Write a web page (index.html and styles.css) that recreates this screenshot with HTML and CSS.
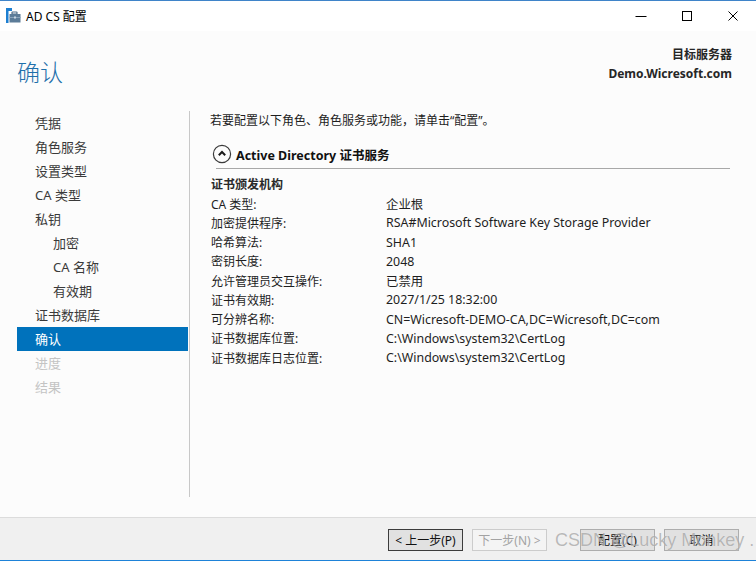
FILE: index.html
```html
<!DOCTYPE html>
<html lang="zh-CN">
<head>
<meta charset="utf-8">
<title>AD CS 配置</title>
<link rel="stylesheet" href="styles.css">
</head>
<body>
<div class="window">
  <div class="titlebar">
    <svg class="app-icon" width="16" height="16" viewBox="0 0 16 16">
      <rect x="0" y="0" width="6" height="3" fill="#1d7fd1"/>
      <rect x="0" y="0" width="2.5" height="15" fill="#1d7fd1"/>
      <rect x="6" y="4" width="5" height="2.2" rx="0.6" fill="none" stroke="#4a6a86" stroke-width="1.2"/>
      <rect x="3.5" y="6" width="11" height="8.5" fill="#5c7c98"/>
      <rect x="3.5" y="9" width="11" height="1" fill="#89a4bb"/>
      <rect x="8" y="8.5" width="2" height="2" fill="#c9d6e1"/>
    </svg>
    <span class="title-text">AD CS 配置</span>
    <div class="controls">
      <span class="ctl"><svg width="12" height="12" viewBox="0 0 12 12"><line x1="0.5" y1="6.5" x2="11.5" y2="6.5" stroke="#000" stroke-width="1"/></svg></span>
      <span class="ctl"><svg width="12" height="12" viewBox="0 0 12 12"><rect x="1.5" y="1.5" width="9" height="9" fill="none" stroke="#000" stroke-width="1"/></svg></span>
      <span class="ctl"><svg width="12" height="12" viewBox="0 0 12 12"><path d="M1.5 1.5 L10.5 10.5 M10.5 1.5 L1.5 10.5" stroke="#000" stroke-width="1"/></svg></span>
    </div>
  </div>

  <div class="header">
    <div class="page-title">确认</div>
    <div class="target">
      <div class="target-label">目标服务器</div>
      <div class="target-name">Demo.Wicresoft.com</div>
    </div>
  </div>

  <div class="main">
    <nav class="nav">
      <div class="nav-item">凭据</div>
      <div class="nav-item">角色服务</div>
      <div class="nav-item">设置类型</div>
      <div class="nav-item">CA 类型</div>
      <div class="nav-item">私钥</div>
      <div class="nav-item sub">加密</div>
      <div class="nav-item sub">CA 名称</div>
      <div class="nav-item sub">有效期</div>
      <div class="nav-item">证书数据库</div>
      <div class="nav-item active">确认</div>
      <div class="nav-item disabled">进度</div>
      <div class="nav-item disabled">结果</div>
    </nav>
    <div class="vsep"></div>
    <section class="content">
      <p class="intro">若要配置以下角色、角色服务或功能，请单击“配置”。</p>
      <div class="section-head">
        <svg class="collapse" width="20" height="20" viewBox="0 0 20 20">
          <circle cx="10" cy="10" r="8.6" fill="none" stroke="#3a3a3a" stroke-width="1.2"/>
          <path d="M6.8 11.2 L10 8 L13.2 11.2" fill="none" stroke="#1a1a1a" stroke-width="2"/>
        </svg>
        <span class="section-title">Active Directory 证书服务</span>
      </div>
      <div class="hline"></div>
      <div class="group-title">证书颁发机构</div>
      <div class="details">
        <div class="k">CA 类型:</div><div class="v">企业根</div>
        <div class="k">加密提供程序:</div><div class="v">RSA#Microsoft Software Key Storage Provider</div>
        <div class="k">哈希算法:</div><div class="v">SHA1</div>
        <div class="k">密钥长度:</div><div class="v">2048</div>
        <div class="k">允许管理员交互操作:</div><div class="v">已禁用</div>
        <div class="k">证书有效期:</div><div class="v">2027/1/25 18:32:00</div>
        <div class="k">可分辨名称:</div><div class="v">CN=Wicresoft-DEMO-CA,DC=Wicresoft,DC=com</div>
        <div class="k">证书数据库位置:</div><div class="v">C:\Windows\system32\CertLog</div>
        <div class="k">证书数据库日志位置:</div><div class="v">C:\Windows\system32\CertLog</div>
      </div>
    </section>
  </div>

  <div class="footer">
    <button class="btn focused">&lt; 上一步(P)</button>
    <button class="btn" disabled>下一步(N) &gt;</button>
    <button class="btn gap">配置(C)</button>
    <button class="btn">取消</button>
    <div class="watermark">CSDN @Lucky Monkey .</div>
  </div>
  <div class="below"></div>
</div>
</body>
</html>
```

FILE: styles.css
```css
* { box-sizing: border-box; }
html, body {
  margin: 0;
  padding: 0;
  width: 756px;
  height: 563px;
  overflow: hidden;
  background: #ffffff;
}
body {
  font-family: "Noto Sans", "Noto Sans CJK SC", sans-serif;
  font-size: 12px;
  color: #1e1e1e;
}
.window {
  width: 756px;
  height: 563px;
  display: flex;
  flex-direction: column;
  border-top: 1px solid #3f84c9;
}
.titlebar {
  height: 30px;
  flex: none;
  background: #ffffff;
  display: flex;
  align-items: center;
  padding-left: 6px;
}
.app-icon { margin-right: 4px; margin-top: -1px; }
.title-text {
  font-size: 12px;
  color: #000;
  margin-top: -1px;
}
.controls {
  margin-left: auto;
  display: flex;
  align-items: center;
  height: 100%;
}
.ctl {
  width: 46px;
  height: 30px;
  display: flex;
  align-items: center;
  justify-content: center;
  margin-top: -1px;
}
.ctl svg { display: block; }
.header {
  height: 70px;
  flex: none;
  background: #fcfcfc;
  display: flex;
  align-items: flex-start;
  justify-content: space-between;
  padding: 0 24px 0 17px;
}
.page-title {
  font-family: "Noto Sans CJK SC", sans-serif;
  font-size: 23px;
  font-weight: 300;
  color: #1f70ab;
  margin-top: 24px;
  line-height: 32px;
}
.target {
  text-align: right;
  margin-top: 14px;
  font-weight: bold;
  color: #262626;
  line-height: 19px;
}
.main {
  height: 416px;
  flex: none;
  display: flex;
  background: #fcfcfc;
}
.nav {
  width: 189px;
  padding: 10px 1px 0 17px;
}
.nav-item {
  height: 24px;
  line-height: 24px;
  padding-left: 18px;
  color: #3a3a3a;
  font-size: 13px;
}
.nav-item.sub { padding-left: 36px; }
.nav-item.active { background: #0072bc; color: #ffffff; }
.nav-item.disabled { color: #c4c4c4; }
.vsep {
  width: 1px;
  background: #c8c8c8;
  margin: 10px 0 20px 0;
}
.content {
  flex: 1;
  padding: 10px 26px 0 20px;
}
.intro {
  margin: 0;
  line-height: 19px;
  color: #1e1e1e;
}
.section-head {
  display: flex;
  align-items: center;
  height: 20px;
  margin-top: 14px;
  margin-left: 2px;
}
.collapse { display: block; margin-right: 4px; }
.section-title {
  font-weight: bold;
  font-size: 12.5px;
  color: #111;
}
.hline {
  height: 1px;
  background: #a8a8a8;
  margin: 4px 0 0 6px;
}
.group-title {
  font-weight: bold;
  color: #2a2a2a;
  line-height: 19px;
  margin-top: 6px;
  padding-left: 1px;
}
.details {
  display: grid;
  grid-template-columns: 175px 1fr;
  grid-auto-rows: 19.25px;
  align-items: center;
  padding-left: 1px;
  color: #1e1e1e;
}
.v { font-size: 12.4px; }
.footer {
  position: relative;
  height: 44px;
  flex: none;
  background: #f0f0f0;
  border-top: 1px solid #dcdcdc;
  border-bottom: 1px solid #1e82d8;
  display: flex;
  align-items: center;
  padding-left: 388px;
  gap: 9px;
}
.btn {
  width: 75px;
  height: 22px;
  padding: 0;
  background: #e1e1e1;
  border: 1px solid #adadad;
  font-family: "Noto Sans", "Noto Sans CJK SC", sans-serif;
  font-size: 12px;
  color: #111;
  margin-top: 1px;
}
.btn.focused { border-color: #3c3c3c; }
.btn:disabled {
  background: #f4f4f4;
  border-color: #cccccc;
  color: #a3a3a3;
}
.btn.gap { margin-left: 24px; }
.watermark {
  position: absolute;
  left: 555px;
  top: 12px;
  font-family: "Liberation Sans", sans-serif;
  font-size: 18px;
  color: rgba(120, 120, 120, 0.5);
  white-space: nowrap;
  text-shadow: 0 0 1px rgba(255,255,255,0.7);
}
.below {
  flex: 1;
  background: #ffffff;
}
```
